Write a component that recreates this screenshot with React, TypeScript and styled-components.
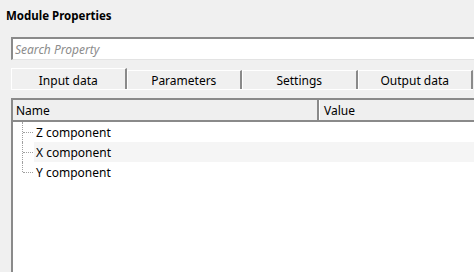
import React from 'react';
import styled, { createGlobalStyle } from 'styled-components';

const GlobalStyle = createGlobalStyle`
  html, body {
    margin: 0;
    padding: 0;
    background: #f0f0f0;
    overflow: hidden;
  }
  body {
    font-family: "Noto Sans", "Open Sans", sans-serif;
    font-size: 12px;
    color: #000;
  }
`;

const Panel = styled.div`
  width: 474px;
  height: 272px;
  display: flex;
  flex-direction: column;
  overflow: hidden;
`;

const Title = styled.div`
  font-weight: bold;
  font-size: 11.5px;
  line-height: 16px;
  padding: 8px 0 0 6px;
  height: 29px;
  box-sizing: border-box;
`;

const SearchBox = styled.input`
  margin: 8px 0 0 11px;
  width: 480px;
  height: 23px;
  box-sizing: border-box;
  border: 1px solid #e3e3e3;
  border-top: 2px solid #8a8a8a;
  border-left: 2px solid #8a8a8a;
  background: #fff;
  font-family: "Noto Sans", sans-serif;
  font-size: 12px;
  font-style: italic;
  padding: 1px 2px 0;
  outline: none;
  &::placeholder {
    color: #8c8c8c;
  }
`;

const TabBar = styled.div`
  display: grid;
  grid-template-columns: repeat(4, 1fr);
  margin: 8px 1px 0 11px;
  height: 21px;
  align-items: end;
  border-bottom: 1px solid #fff;
`;

const Tab = styled.div<{ $active?: boolean }>`
  height: ${(p) => (p.$active ? '21px' : '19px')};
  box-sizing: border-box;
  display: flex;
  align-items: center;
  justify-content: center;
  background: #f0f0f0;
  border-top: 1px solid #fff;
  border-left: 1px solid #fff;
  border-right: 2px solid #8a8a8a;
  padding-top: ${(p) => (p.$active ? '3px' : '1px')};
`;

const Table = styled.div`
  margin: 8px 0 0 11px;
  flex: 1;
  width: 480px;
  background: #fff;
  border-top: 2px solid #8a8a8a;
  border-left: 2px solid #8a8a8a;
  display: flex;
  flex-direction: column;
`;

const HeaderRow = styled.div`
  display: grid;
  grid-template-columns: 306px 1fr;
  height: 22px;
  background: #efefef;
  border-bottom: 2px solid #8a8a8a;
  box-sizing: border-box;
`;

const HeaderCell = styled.div<{ $first?: boolean }>`
  display: flex;
  align-items: center;
  padding-left: ${(p) => (p.$first ? '3px' : '4px')};
  border-left: ${(p) => (p.$first ? 'none' : '1px solid #fff')};
  border-right: ${(p) => (p.$first ? '2px solid #8a8a8a' : 'none')};
`;

const Row = styled.div`
  display: flex;
  align-items: center;
  height: 20px;
`;

const Guide = styled.div<{ $last?: boolean }>`
  width: 21px;
  align-self: stretch;
  position: relative;
  flex: none;
  &::before {
    content: '';
    position: absolute;
    left: 9px;
    top: 0;
    height: ${(p) => (p.$last ? '10px' : '20px')};
    border-left: 1px dotted #a0a0a0;
  }
  &::after {
    content: '';
    position: absolute;
    left: 10px;
    top: 10px;
    width: 10px;
    border-top: 1px dotted #a0a0a0;
  }
`;

const Label = styled.div<{ $alt?: boolean }>`
  flex: 1;
  align-self: stretch;
  display: flex;
  align-items: center;
  padding-left: 2px;
  background: ${(p) => (p.$alt ? '#f5f5f5' : '#fff')};
`;

const rows = ['Z component', 'X component', 'Y component'];

export default function App() {
  return (
    <Panel>
      <GlobalStyle />
      <Title>Module Properties</Title>
      <SearchBox placeholder="Search Property" />
      <TabBar>
        <Tab $active>Input data</Tab>
        <Tab>Parameters</Tab>
        <Tab>Settings</Tab>
        <Tab>Output data</Tab>
      </TabBar>
      <Table>
        <HeaderRow>
          <HeaderCell $first>Name</HeaderCell>
          <HeaderCell>Value</HeaderCell>
        </HeaderRow>
        {rows.map((r, i) => (
          <Row key={r}>
            <Guide $last={i === rows.length - 1} />
            <Label $alt={i % 2 === 1}>{r}</Label>
          </Row>
        ))}
      </Table>
    </Panel>
  );
}
